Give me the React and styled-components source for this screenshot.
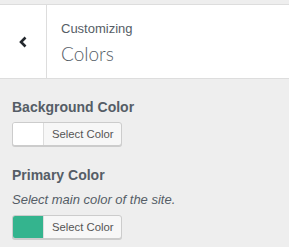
import React from 'react';
import styled, { createGlobalStyle } from 'styled-components';

const GlobalStyle = createGlobalStyle`
  html, body {
    margin: 0;
    padding: 0;
    background: #eeeeee;
    font-family: "Liberation Sans", Arial, sans-serif;
    color: #555d66;
  }
`;

const Panel = styled.div`
  width: 289px;
  height: 247px;
  overflow: hidden;
  background: #eeeeee;
  padding-top: 4px;
`;

const Header = styled.div`
  display: flex;
  height: 73px;
  background: #ffffff;
  border-top: 1px solid #dddddd;
  border-bottom: 1px solid #dddddd;
`;

const BackButton = styled.button`
  width: 47px;
  flex: none;
  border: none;
  border-right: 1px solid #dddddd;
  background: #ffffff;
  display: flex;
  align-items: center;
  justify-content: center;
  padding: 0;
  color: #23282d;
`;

const Titles = styled.div`
  display: flex;
  flex-direction: column;
  padding: 16px 0 0 14px;
`;

const Eyebrow = styled.span`
  font-size: 13px;
  line-height: 16px;
  color: #555d66;
`;

const Heading = styled.h3`
  margin: 5px 0 0;
  font-family: Lato, "Liberation Sans", sans-serif;
  font-size: 19px;
  line-height: 24px;
  font-weight: 300;
  color: #555d66;
`;

const Controls = styled.div`
  display: flex;
  flex-direction: column;
  padding: 19px 12px 0;
`;

const Control = styled.div`
  display: flex;
  flex-direction: column;
  margin-bottom: 20px;
`;

const Label = styled.span`
  font-size: 14px;
  font-weight: 700;
  line-height: 18px;
  color: #555d66;
  margin-bottom: 6px;
`;

const Description = styled.span`
  font-size: 13px;
  font-style: italic;
  line-height: 18px;
  color: #555d66;
  margin: 1px 0 6px;
`;

const ColorButton = styled.button`
  display: flex;
  align-self: flex-start;
  height: 24px;
  padding: 0;
  border: 1px solid #cccccc;
  border-radius: 3px;
  background: #f7f7f7;
  box-shadow: 0 1px 0 #cccccc;
  overflow: hidden;
  box-sizing: border-box;
`;

const Swatch = styled.span`
  width: 30px;
  height: 100%;
  background: ${p => p.color};
  border-right: 1px solid #dddddd;
`;

const ButtonText = styled.span`
  display: flex;
  align-items: center;
  padding: 0 7px 0 8px;
  font-family: "Liberation Sans", Arial, sans-serif;
  font-size: 11.3px;
  color: #555555;
`;

const ChevronLeft = () => (
  <svg width="10" height="12" viewBox="0 0 10 12">
    <path d="M7.5 1.5 L3 6 L7.5 10.5" fill="none" stroke="#23282d" strokeWidth="2.6" />
  </svg>
);

export default function App() {
  return (
    <Panel>
      <GlobalStyle />
      <Header>
        <BackButton aria-label="Back">
          <ChevronLeft />
        </BackButton>
        <Titles>
          <Eyebrow>Customizing</Eyebrow>
          <Heading>Colors</Heading>
        </Titles>
      </Header>
      <Controls>
        <Control>
          <Label>Background Color</Label>
          <ColorButton>
            <Swatch color="#ffffff" />
            <ButtonText>Select Color</ButtonText>
          </ColorButton>
        </Control>
        <Control>
          <Label>Primary Color</Label>
          <Description>Select main color of the site.</Description>
          <ColorButton>
            <Swatch color="#34b48e" />
            <ButtonText>Select Color</ButtonText>
          </ColorButton>
        </Control>
      </Controls>
    </Panel>
  );
}
